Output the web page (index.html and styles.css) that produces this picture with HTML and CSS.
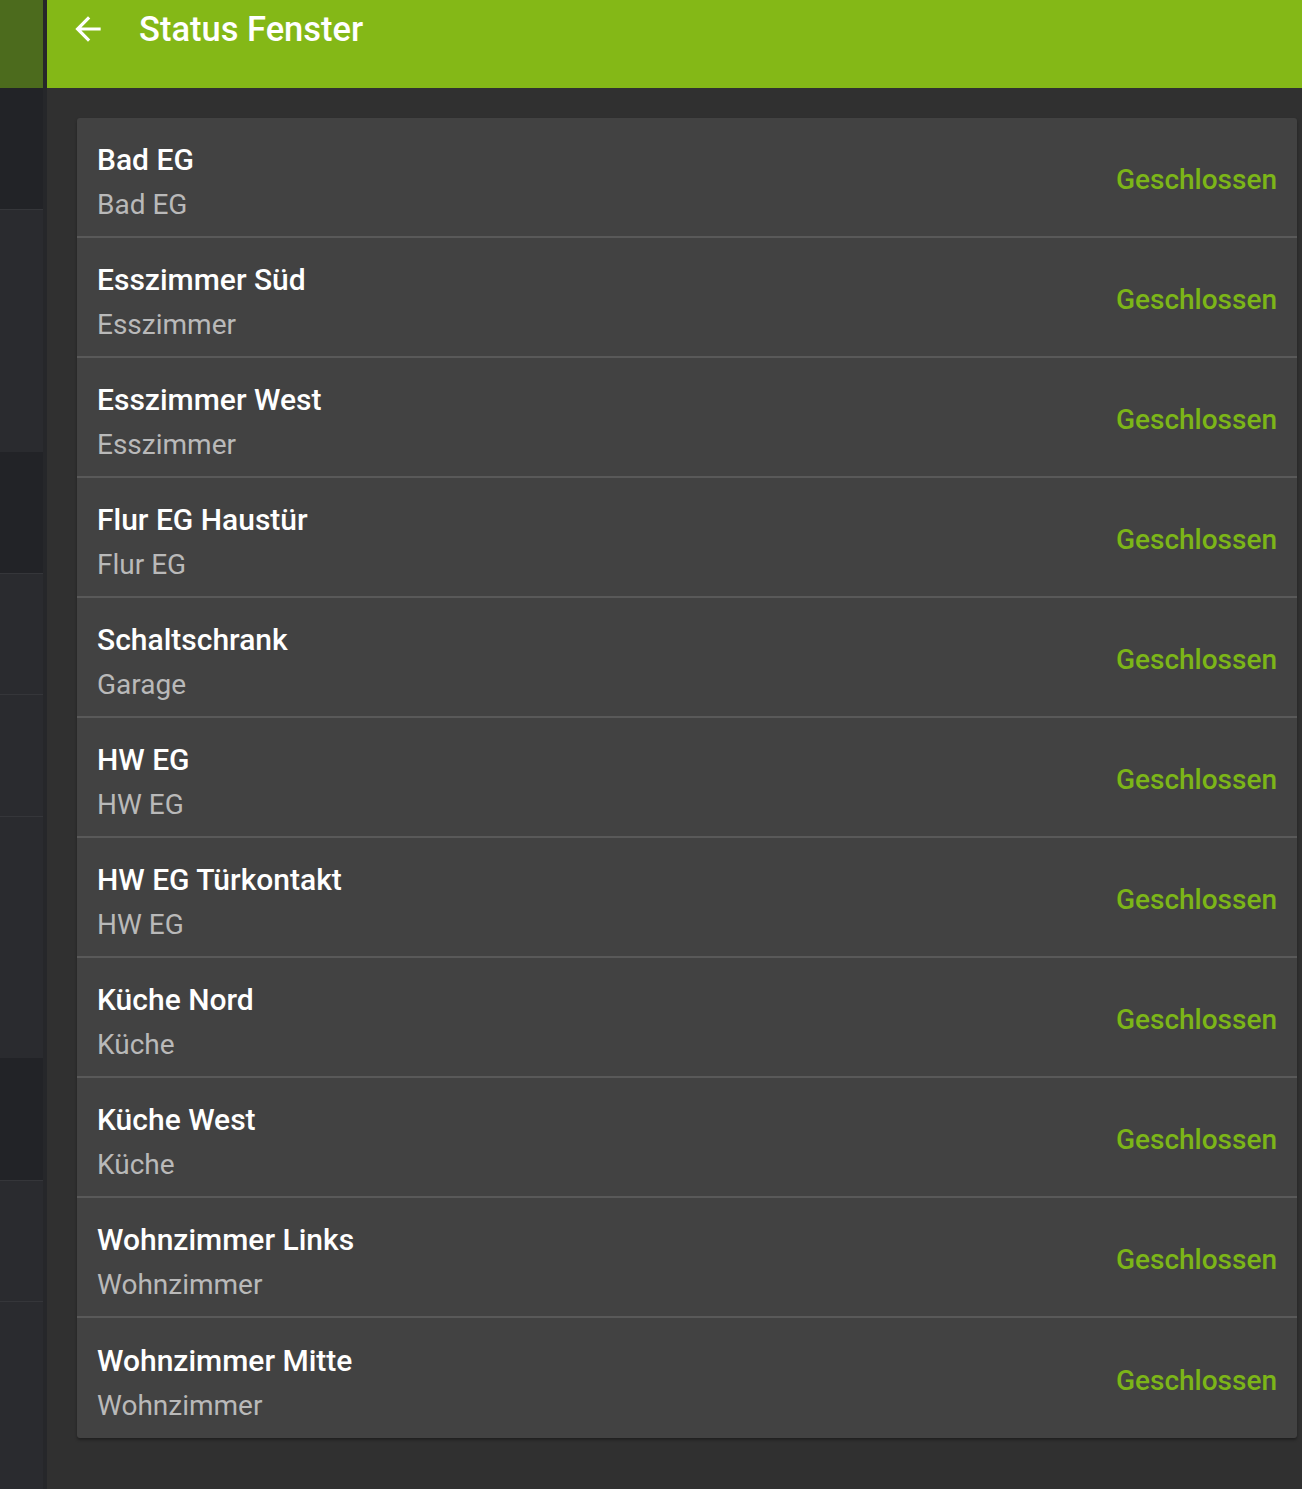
FILE: index.html
```html
<!DOCTYPE html>
<html lang="de">
<head>
<meta charset="utf-8">
<title>Status Fenster</title>
<link rel="stylesheet" href="styles.css">
</head>
<body>
<div class="app">
  <aside class="sidebar">
    <div class="side-top"></div>
    <div class="side-item dark"></div>
    <div class="side-item line"></div>
    <div class="side-item"></div>
    <div class="side-item dark"></div>
    <div class="side-item line"></div>
    <div class="side-item line"></div>
    <div class="side-item line"></div>
    <div class="side-item"></div>
    <div class="side-item dark"></div>
    <div class="side-item line"></div>
    <div class="side-item line"></div>
    <div class="side-item"></div>
  </aside>
  <main class="main">
    <header class="toolbar">
      <svg class="back" viewBox="0 0 24 24" width="38" height="38"><path d="M20 11H7.83l5.59-5.59L12 4l-8 8 8 8 1.41-1.41L7.83 13H20v-2z" fill="#fff"/></svg>
      <h1 class="title">Status Fenster</h1>
    </header>
    <section class="content">
      <div class="card">
        <div class="row"><div class="text"><div class="name">Bad EG</div><div class="room">Bad EG</div></div><div class="state">Geschlossen</div></div>
        <div class="row"><div class="text"><div class="name">Esszimmer Süd</div><div class="room">Esszimmer</div></div><div class="state">Geschlossen</div></div>
        <div class="row"><div class="text"><div class="name">Esszimmer West</div><div class="room">Esszimmer</div></div><div class="state">Geschlossen</div></div>
        <div class="row"><div class="text"><div class="name">Flur EG Haustür</div><div class="room">Flur EG</div></div><div class="state">Geschlossen</div></div>
        <div class="row"><div class="text"><div class="name">Schaltschrank</div><div class="room">Garage</div></div><div class="state">Geschlossen</div></div>
        <div class="row"><div class="text"><div class="name">HW EG</div><div class="room">HW EG</div></div><div class="state">Geschlossen</div></div>
        <div class="row"><div class="text"><div class="name">HW EG Türkontakt</div><div class="room">HW EG</div></div><div class="state">Geschlossen</div></div>
        <div class="row"><div class="text"><div class="name">Küche Nord</div><div class="room">Küche</div></div><div class="state">Geschlossen</div></div>
        <div class="row"><div class="text"><div class="name">Küche West</div><div class="room">Küche</div></div><div class="state">Geschlossen</div></div>
        <div class="row"><div class="text"><div class="name">Wohnzimmer Links</div><div class="room">Wohnzimmer</div></div><div class="state">Geschlossen</div></div>
        <div class="row"><div class="text"><div class="name">Wohnzimmer Mitte</div><div class="room">Wohnzimmer</div></div><div class="state">Geschlossen</div></div>
      </div>
    </section>
  </main>
</div>
</body>
</html>
```
FILE: styles.css
```css
* { box-sizing: border-box; }
html, body { margin: 0; padding: 0; }
body {
  background: #303030;
  font-family: Roboto, "Liberation Sans", sans-serif;
  width: 1302px;
  height: 1489px;
  overflow: hidden;
}
.app {
  display: flex;
  height: 1489px;
}
.sidebar {
  width: 47px;
  flex: 0 0 47px;
  display: flex;
  flex-direction: column;
  background: #2a2b2f;
  border-right: 4px solid #26272a;
}
.side-top {
  height: 88px;
  flex: 0 0 88px;
  background: #4c6b1d;
}
.side-item {
  height: 121.3px;
  flex: 0 0 121.3px;
  background: #2a2b2f;
}
.side-item.dark { background: #222327; }
.side-item.line { border-top: 1px solid #35363a; }
.main {
  flex: 1;
  display: flex;
  flex-direction: column;
}
.toolbar {
  height: 88px;
  background: #84b817;
  display: flex;
  align-items: flex-start;
  padding: 10px 0 0 22px;
}
.title {
  margin: -1px 0 0 32px;
  color: #fff;
  font-size: 34.5px;
  font-weight: 500;
  line-height: 40px;
}
.content {
  padding: 30px 5px 0 30px;
}
.card {
  background: #424242;
  border-radius: 3px;
  box-shadow: 0 2px 3px rgba(0,0,0,0.35);
}
.row {
  height: 120px;
  display: flex;
  align-items: center;
  justify-content: space-between;
  padding: 4px 20px 0 20px;
  border-bottom: 2px solid #595959;
}
.row:last-child { border-bottom: none; }
.text { display: flex; flex-direction: column; padding-top: 8px; }
.name {
  color: #fff;
  font-size: 30px;
  font-weight: 500;
  line-height: 42px;
}
.room {
  color: #b9b9b9;
  font-size: 28px;
  line-height: 47px;
}
.state {
  color: #7cb518;
  font-size: 28px;
  font-weight: 500;
}
```
